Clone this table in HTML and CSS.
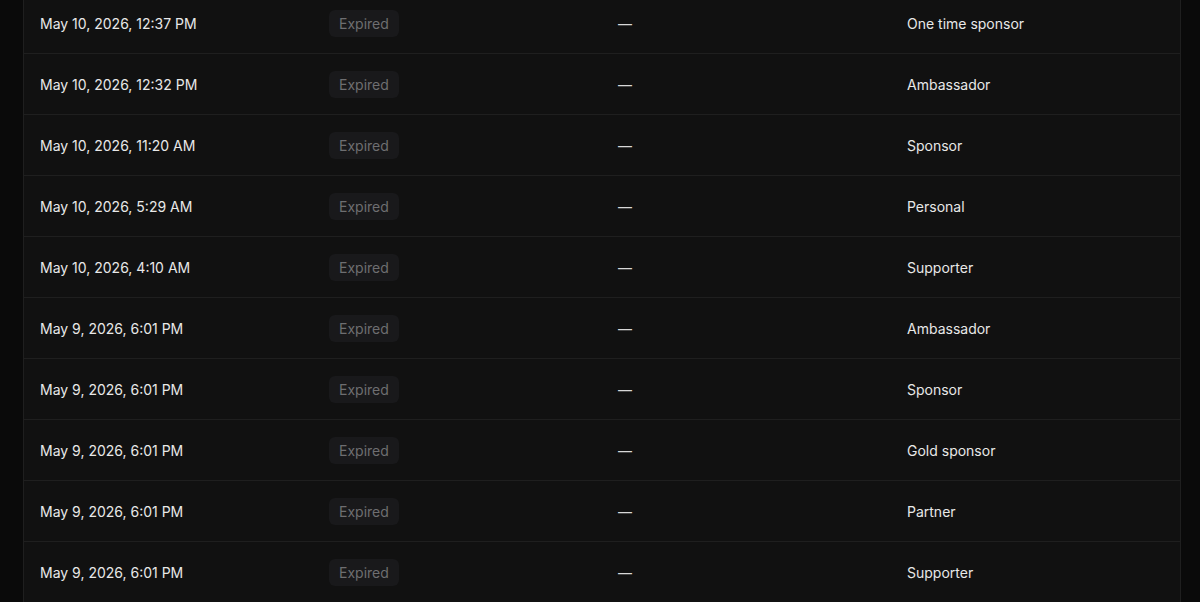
FILE: index.html
```html
<!DOCTYPE html>
<html lang="en">
<head>
    <meta charset="UTF-8">
    <meta name="viewport" content="width=device-width, initial-scale=1.0">
    <title>Sponsorships</title>
    <link rel="stylesheet" href="styles.css">
</head>
<body>
    <div class="page">
        <div class="table-wrap">
            <table class="records">
                <tbody>
                    <tr><td>May 10, 2026, 12:37 PM</td><td><span class="badge">Expired</span></td><td class="dash">—</td><td>One time sponsor</td></tr>
                    <tr><td>May 10, 2026, 12:32 PM</td><td><span class="badge">Expired</span></td><td class="dash">—</td><td>Ambassador</td></tr>
                    <tr><td>May 10, 2026, 11:20 AM</td><td><span class="badge">Expired</span></td><td class="dash">—</td><td>Sponsor</td></tr>
                    <tr><td>May 10, 2026, 5:29 AM</td><td><span class="badge">Expired</span></td><td class="dash">—</td><td>Personal</td></tr>
                    <tr><td>May 10, 2026, 4:10 AM</td><td><span class="badge">Expired</span></td><td class="dash">—</td><td>Supporter</td></tr>
                    <tr><td>May 9, 2026, 6:01 PM</td><td><span class="badge">Expired</span></td><td class="dash">—</td><td>Ambassador</td></tr>
                    <tr><td>May 9, 2026, 6:01 PM</td><td><span class="badge">Expired</span></td><td class="dash">—</td><td>Sponsor</td></tr>
                    <tr><td>May 9, 2026, 6:01 PM</td><td><span class="badge">Expired</span></td><td class="dash">—</td><td>Gold sponsor</td></tr>
                    <tr><td>May 9, 2026, 6:01 PM</td><td><span class="badge">Expired</span></td><td class="dash">—</td><td>Partner</td></tr>
                    <tr><td>May 9, 2026, 6:01 PM</td><td><span class="badge">Expired</span></td><td class="dash">—</td><td>Supporter</td></tr>
                </tbody>
            </table>
        </div>
    </div>
</body>
</html>
```

FILE: styles.css
```css
html, body {
    margin: 0;
    padding: 0;
    background-color: #0a0a0a;
}
body {
    font-family: Inter, "Noto Sans", sans-serif;
    font-size: 14px;
    color: #e8e8e8;
    overflow: hidden;
    height: 602px;
}
.page {
    padding: 0 19px 0 23px;
    margin-top: -7px;
}
.table-wrap {
    background: #111111;
    border-left: 1px solid #1f1f1f;
    border-right: 1px solid #1f1f1f;
}
.records {
    width: 100%;
    border-collapse: collapse;
    table-layout: fixed;
}
.records td {
    height: 60px;
    padding: 0 16px;
    border-bottom: 1px solid #1f1f1f;
    vertical-align: middle;
    white-space: nowrap;
}
.badge {
    display: inline-block;
    padding: 4px 10px;
    line-height: 19px;
    border-radius: 6px;
    background: #19191b;
    color: #6e6e70;
}
.dash {
    color: #d8d8d8;
}
```
